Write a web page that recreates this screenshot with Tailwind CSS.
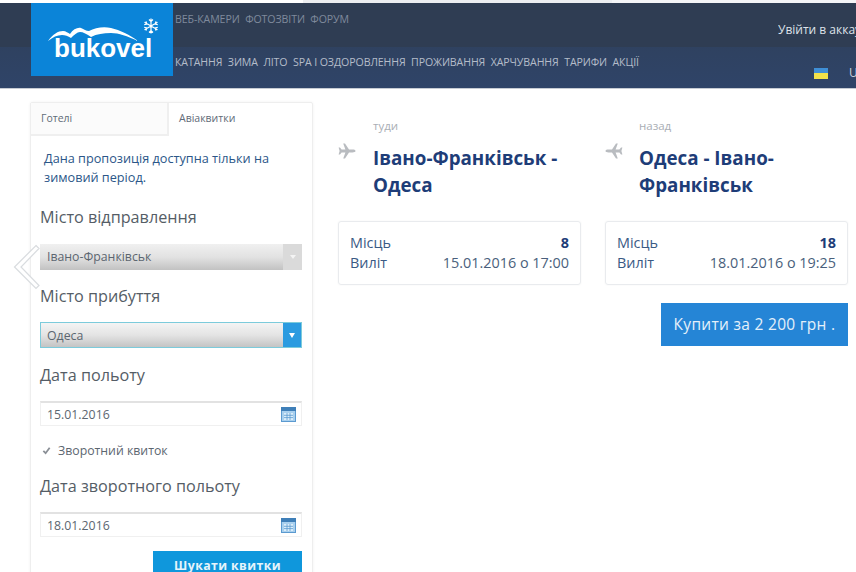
<!DOCTYPE html>
<html>
<head>
<meta charset="utf-8">
<script src="https://cdn.jsdelivr.net/npm/@tailwindcss/browser@4"></script>
</head>
<body class="bg-white">
<div class="relative w-[856px] h-[572px] overflow-hidden bg-white font-['Open_Sans',sans-serif]">
  <!-- top strip -->
  <div class="h-[3px] flex bg-white">
    <div class="w-[303px]"></div>
    <div class="w-[309px] bg-[#eceef1]"></div>
    <div class="flex-1 bg-[#f4f5f7]"></div>
  </div>
  <!-- header -->
  <header class="relative h-[86px] bg-gradient-to-b from-[#2f3f58] to-[#2f4468] border-b border-[#c6cbd3]">
    <div class="h-[44px] bg-[#2f3d53] flex">
      <div class="w-[175px]"></div>
      <div class="flex gap-[5.5px] pt-[9px] text-[10.6px] leading-[14px] text-[#7f8a9c] tracking-[-0.1px]"><span>ВЕБ-КАМЕРИ</span><span>ФОТОЗВІТИ</span><span>ФОРУМ</span></div>
      <div class="ml-auto pt-[19px] text-[12px] leading-[16px] text-[#dfe3ea] whitespace-nowrap w-[78px] overflow-hidden">Увійти в аккаунт</div>
    </div>
    <div class="flex">
      <div class="w-[175px]"></div>
      <div class="flex gap-[5.5px] pt-[8px] text-[10.6px] leading-[14px] text-[#b4bcc9] tracking-[-0.1px]"><span>КАТАННЯ</span><span>ЗИМА</span><span>ЛІТО</span><span>SPA І ОЗДОРОВЛЕННЯ</span><span>ПРОЖИВАННЯ</span><span>ХАРЧУВАННЯ</span><span>ТАРИФИ</span><span>АКЦІЇ</span></div>
      <div class="ml-auto flex items-center pt-[18px] h-[34px]">
        <div class="w-[14px] h-[11px] flex flex-col mr-[21px]"><div class="h-[5px] bg-[#3f8fd6]"></div><div class="h-[6px] bg-[#f2e24a]"></div></div>
        <span class="text-[12px] leading-[14px] text-[#c8d0dc] w-[7px] overflow-hidden">UA</span>
      </div>
    </div>
    <!-- logo -->
    <div class="absolute left-[31px] top-0 w-[142px] h-[73px] bg-[#0b84d8]">
      <svg class="absolute left-[16px] top-[19px]" width="92" height="24" viewBox="0 0 92 24" fill="#fff">
        <path d="M1 19 C6 12 11 9 16 9 C19 9 21 11 23 12 C26 7 31 5 34 6 C37 7 39 9 42 9 C48 6 56 4 64 6 C73 8 83 13 91 19 C80 14 72 11 64 11 C56 11 50 12 44 15 C40 12 36 10 33 10 C30 10 27 13 24 16 C21 14 18 13 15 13 C10 13 6 15 1 19 Z"/>
      </svg>
      <svg class="absolute left-[112px] top-[15px]" width="16" height="16" viewBox="0 0 16 16" fill="none" stroke="#fff" stroke-width="1.2">
        <path d="M8 0.5V15.5M1.5 4.2L14.5 11.8M14.5 4.2L1.5 11.8M6 1.5L8 3.5L10 1.5M6 14.5L8 12.5L10 14.5M1.2 6.8L3.8 6L3 3.4M14.8 9.2L12.2 10L13 12.6M14.8 6.8L12.2 6L13 3.4M1.2 9.2L3.8 10L3 12.6"/>
      </svg>
      <div class="absolute left-[23px] top-[29px] font-['Liberation_Sans',sans-serif] text-[26px] leading-[32px] font-bold text-white">bukovel</div>
    </div>
  </header>

  <main class="flex items-start pt-[13px]">
    <!-- left panel -->
    <section class="ml-[30px] w-[283px] h-[500px] border border-[#eeeeee] rounded-[2px] shadow-[0_0_3px_rgba(0,0,0,0.06)]">
      <div class="flex h-[33px]">
        <div class="w-[138px] pl-[10px] pt-[7px] bg-[#fbfbfb] border-b-[2px] border-r-[2px] border-[#efefef] text-[10.5px] leading-[16px] text-[#5f6b78]">Готелі</div>
        <div class="flex-1 pl-[10px] pt-[7px] text-[10.5px] leading-[16px] text-[#5f6b78]">Авіаквитки</div>
      </div>
      <div class="pl-[9px] pr-[10px]">
        <p class="pl-[4px] pt-[13px] text-[12.7px] leading-[19px] text-[#2b5688]">Дана пропозиція доступна тільки на зимовий період.</p>
        <h3 class="mt-[18px] text-[16.2px] leading-[24px] text-[#555d66]">Місто відправлення</h3>
        <div class="mt-[15px] h-[26px] flex bg-gradient-to-b from-[#f0f0f0] via-[#e2e2e2] to-[#c2c2c2]">
          <span class="flex-1 pl-[7px] pt-[4px] text-[12.3px] leading-[18px] text-[#5c6670]">Івано-Франківськ</span>
          <span class="w-[19px] flex items-center justify-center bg-[#dadada]"><span class="w-0 h-0 border-x-[3px] border-x-transparent border-t-[4px] border-t-white/70"></span></span>
        </div>
        <h3 class="mt-[14px] text-[16.2px] leading-[24px] text-[#555d66]">Місто прибуття</h3>
        <div class="mt-[14px] h-[26px] flex border border-[#7ccbdb] bg-gradient-to-b from-[#f4f4f4] via-[#e4e4e4] to-[#c4c4c4]">
          <span class="flex-1 pl-[6px] pt-[4px] text-[12.3px] leading-[18px] text-[#5c6670]">Одеса</span>
          <span class="w-[18px] flex items-center justify-center bg-[#2b9be0]"><span class="w-0 h-0 border-x-[3.5px] border-x-transparent border-t-[5px] border-t-white"></span></span>
        </div>
        <h3 class="mt-[15px] text-[16.2px] leading-[24px] text-[#555d66]">Дата польоту</h3>
        <div class="mt-[14px] h-[25px] flex items-center justify-between pl-[6px] pr-[5px] border border-[#f0f0f0] border-t-[2px] border-t-[#e2e2e2]">
          <span class="pt-[1px] text-[12.3px] leading-[18px] text-[#5c6670]">15.01.2016</span>
          <svg width="15" height="15" viewBox="0 0 15 15"><rect x="0.5" y="0.5" width="14" height="14" fill="#a9d0ee" stroke="#5b9ad0"/><rect x="0" y="0" width="15" height="4" fill="#3f7fb8"/><path d="M3 6H12V13H3Z" fill="#dceefa"/><path d="M6 6V13M9 6V13M3 8.3H12M3 10.6H12" stroke="#5b9ad0" stroke-width="0.8"/></svg>
        </div>
        <div class="mt-[16px] flex items-center h-[18px]">
          <svg class="ml-[2px] mb-[2px]" width="9" height="9" viewBox="0 0 10 10" fill="none" stroke="#8a8f96" stroke-width="2"><path d="M1.5 5.5L4 8L8.5 2"/></svg>
          <span class="ml-[7px] text-[12.3px] leading-[18px] text-[#5c6670]">Зворотний квиток</span>
        </div>
        <h3 class="mt-[14px] text-[16.2px] leading-[24px] text-[#555d66]">Дата зворотного польоту</h3>
        <div class="mt-[14px] h-[25px] flex items-center justify-between pl-[6px] pr-[5px] border border-[#f0f0f0] border-t-[2px] border-t-[#e2e2e2]">
          <span class="pt-[1px] text-[12.3px] leading-[18px] text-[#5c6670]">18.01.2016</span>
          <svg width="15" height="15" viewBox="0 0 15 15"><rect x="0.5" y="0.5" width="14" height="14" fill="#a9d0ee" stroke="#5b9ad0"/><rect x="0" y="0" width="15" height="4" fill="#3f7fb8"/><path d="M3 6H12V13H3Z" fill="#dceefa"/><path d="M6 6V13M9 6V13M3 8.3H12M3 10.6H12" stroke="#5b9ad0" stroke-width="0.8"/></svg>
        </div>
        <div class="mt-[14px] flex justify-end">
          <div class="w-[149px] h-[30px] bg-[#0f97dc] text-center pt-[6px] text-[12.3px] leading-[18px] font-bold text-[#e6f4fb] tracking-[0.4px]">Шукати квитки</div>
        </div>
      </div>
    </section>

    <!-- right -->
    <section class="ml-[25px] w-[243px]">
      <div class="pl-[35px] pt-[16px] text-[11.5px] leading-[16px] text-[#a9aeb5]">туди</div>
      <div class="relative pl-[35px] pt-[11px]">
        <svg class="absolute left-0 top-[9px]" width="18" height="16" viewBox="0 0 18 16" fill="#b9bcc0"><path d="M17.5 8C17.5 7 16 6.6 14.5 6.6H11L7 0.5H5.2L7.4 6.6H3.6L2 4.6H0.6L1.6 8L0.6 11.4H2L3.6 9.4H7.4L5.2 15.5H7L11 9.4H14.5C16 9.4 17.5 9 17.5 8Z"/></svg>
        <h2 class="text-[18.8px] leading-[27px] font-bold text-[#1e3d78]">Івано-Франківськ - Одеса</h2>
      </div>
      <div class="mt-[22px] h-[64px] rounded-[3px] border border-[#e9ebee] shadow-[0_0_2px_rgba(0,0,0,0.06)] px-[11px] pt-[11px] text-[14.4px] leading-[20px] text-[#3a5a84]">
        <div class="flex justify-between"><span>Місць</span><b class="font-bold text-[#1e3d78]">8</b></div>
        <div class="flex justify-between"><span>Виліт</span><span class="text-[#4a5f7c]">15.01.2016 о 17:00</span></div>
      </div>
    </section>

    <section class="ml-[24px] w-[243px]">
      <div class="pl-[34px] pt-[16px] text-[11.5px] leading-[16px] text-[#a9aeb5]">назад</div>
      <div class="relative pl-[34px] pt-[11px]">
        <svg class="absolute left-0 top-[9px]" width="18" height="16" viewBox="0 0 18 16" fill="#b9bcc0"><path transform="matrix(-1 0 0 1 18 0)" d="M17.5 8C17.5 7 16 6.6 14.5 6.6H11L7 0.5H5.2L7.4 6.6H3.6L2 4.6H0.6L1.6 8L0.6 11.4H2L3.6 9.4H7.4L5.2 15.5H7L11 9.4H14.5C16 9.4 17.5 9 17.5 8Z"/></svg>
        <h2 class="text-[18.8px] leading-[27px] font-bold text-[#1e3d78]">Одеса - Івано-Франківськ</h2>
      </div>
      <div class="mt-[22px] h-[64px] rounded-[3px] border border-[#e9ebee] shadow-[0_0_2px_rgba(0,0,0,0.06)] px-[11px] pt-[11px] text-[14.4px] leading-[20px] text-[#3a5a84]">
        <div class="flex justify-between"><span>Місць</span><b class="font-bold text-[#1e3d78]">18</b></div>
        <div class="flex justify-between"><span>Виліт</span><span class="text-[#4a5f7c]">18.01.2016 о 19:25</span></div>
      </div>
      <div class="mt-[18px] flex justify-end">
        <div class="w-[187px] h-[43px] bg-[#2585d6] text-center pt-[9px] text-[15.5px] leading-[24px] text-[#e4f0fa] tracking-[0.3px]">Купити за 2 200 грн .</div>
      </div>
    </section>
  </main>

  <!-- carousel arrow -->
  <svg class="absolute left-[13px] top-[244px]" width="27" height="46" viewBox="0 0 27 46" fill="#fff" stroke="#d9dcdf" stroke-width="1.2"><path d="M23 1.5L26 4.5L8 23L26 41.5L23 44.5L1.5 23Z"/></svg>
</div>
</body>
</html>
